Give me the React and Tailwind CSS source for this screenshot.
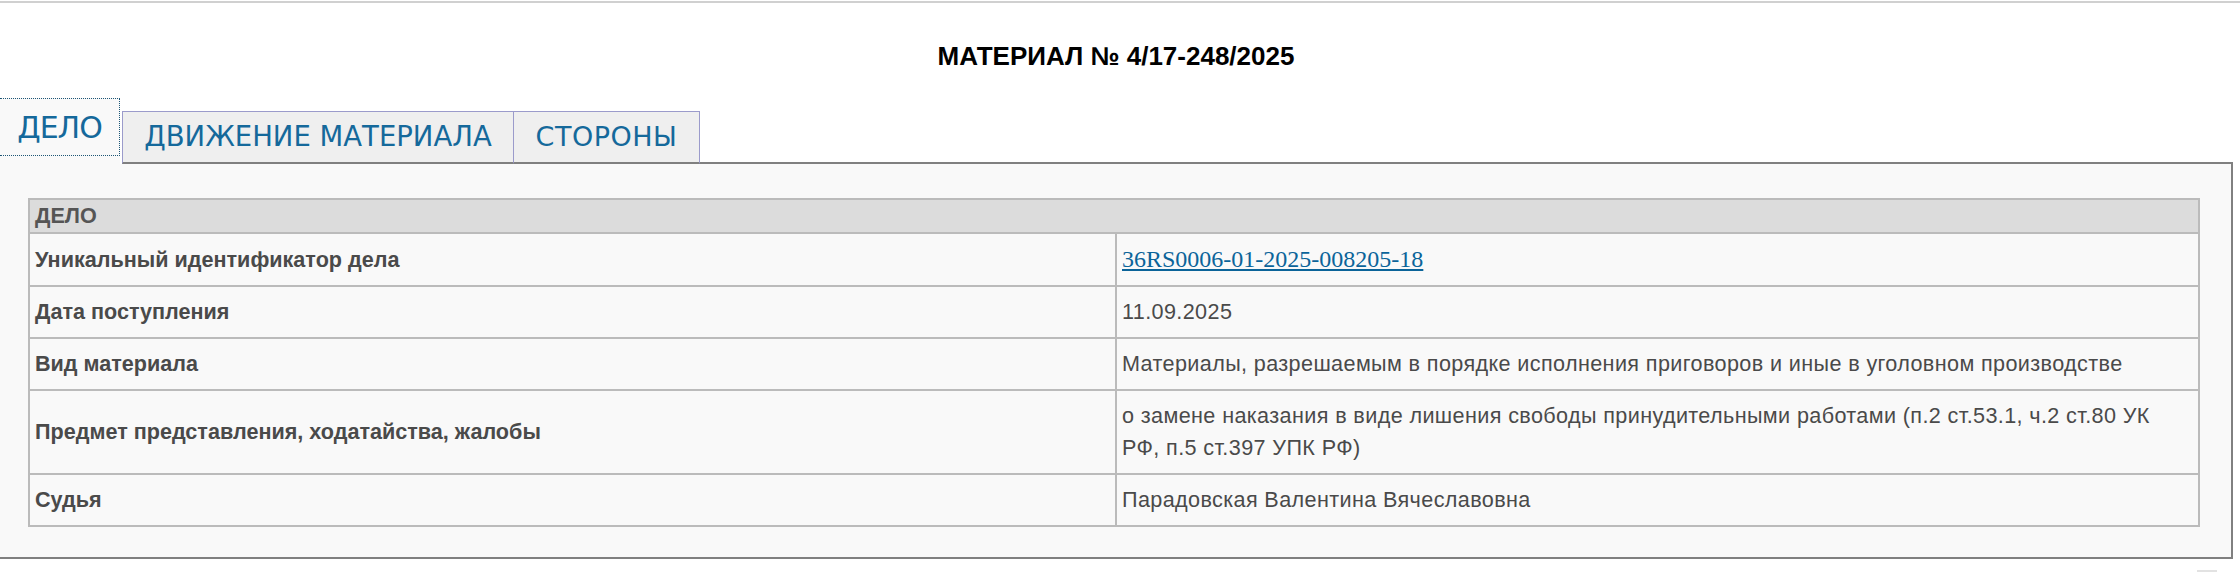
import React from "react";

const rows = [
  {
    label: "Уникальный идентификатор дела",
    value: (
      <a href="#" className="font-['Liberation_Serif','Times_New_Roman',serif] text-[24px] tracking-normal text-[#0b6499] underline">
        36RS0006-01-2025-008205-18
      </a>
    ),
  },
  { label: "Дата поступления", value: "11.09.2025" },
  {
    label: "Вид материала",
    value: "Материалы, разрешаемым в порядке исполнения приговоров и иные в уголовном производстве",
  },
  {
    label: "Предмет представления, ходатайства, жалобы",
    value: (
      <>
        о замене наказания в виде лишения свободы принудительными работами (п.2 ст.53.1, ч.2 ст.80 УК
        <br />
        РФ, п.5 ст.397 УПК РФ)
      </>
    ),
  },
  { label: "Судья", value: "Парадовская Валентина Вячеславовна" },
];

function Tabs() {
  return (
    <div className="flex items-end w-[2233px] font-['DejaVu_Sans',Verdana,sans-serif] text-[#15699b]">
      <div className="w-[120px] h-[66px] bg-[#f9f9f9]">
        <div className="h-[58px] border-t border-r border-b border-dotted border-[#1d5676] flex items-center justify-center text-[30px] tracking-[-1px]">
          ДЕЛО
        </div>
      </div>
      <div className="ml-[2px] w-[391px] h-[53px] bg-[#efefef] border-t border-l border-[#9b9bcb] border-b-2 border-b-[#808080] flex items-center justify-center text-[27.5px]">
        ДВИЖЕНИЕ МАТЕРИАЛА
      </div>
      <div className="w-[187px] h-[53px] bg-[#efefef] border-t border-l border-r border-[#9b9bcb] border-b-2 border-b-[#808080] flex items-center justify-center text-[27px] tracking-[0.5px]">
        СТОРОНЫ
      </div>
      <div className="flex-1 border-b-2 border-[#808080]" />
    </div>
  );
}

function CaseTable() {
  return (
    <table className="w-[2172px] table-fixed border-collapse border-2 border-[#bbbbbb] text-[21.6px] text-[#4a4a4a]">
      <colgroup>
        <col className="w-[1087px]" />
        <col />
      </colgroup>
      <thead>
        <tr>
          <th colSpan={2} className="bg-[#dcdcdc] border-2 border-[#bbbbbb] text-left font-bold text-[#555] leading-[32px] px-[5px] py-0">
            ДЕЛО
          </th>
        </tr>
      </thead>
      <tbody>
        {rows.map((row) => (
          <tr key={row.label}>
            <td className="border-2 border-[#bbbbbb] font-bold leading-[32px] px-[5px] py-[9px] align-middle">{row.label}</td>
            <td className="border-2 border-[#bbbbbb] leading-[32px] tracking-[0.38px] px-[5px] py-[9px] align-middle">{row.value}</td>
          </tr>
        ))}
      </tbody>
    </table>
  );
}

export default function App() {
  return (
    <div className="w-[2240px] h-[572px] overflow-hidden bg-white font-['Liberation_Sans',Arial,sans-serif]">
      <div className="mt-px h-[2px] bg-[#d0d0d0]" />
      <h1 className="w-[2232px] mt-[38px] text-center text-[26px] leading-[30px] font-bold text-black">
        МАТЕРИАЛ № 4/17-248/2025
      </h1>
      <div className="mt-[27px]">
        <Tabs />
        <div className="w-[2233px] bg-[#f9f9f9] border-r-2 border-b-2 border-[#808080] pt-[34px] pb-[30px] pl-[28px]">
          <CaseTable />
        </div>
      </div>
      <div className="flex justify-end pr-[23px] mt-[11px]">
        <div className="w-[20px] h-[20px] border-2 border-[#e2e2e2] bg-[#f4f4f4]" />
      </div>
    </div>
  );
}
